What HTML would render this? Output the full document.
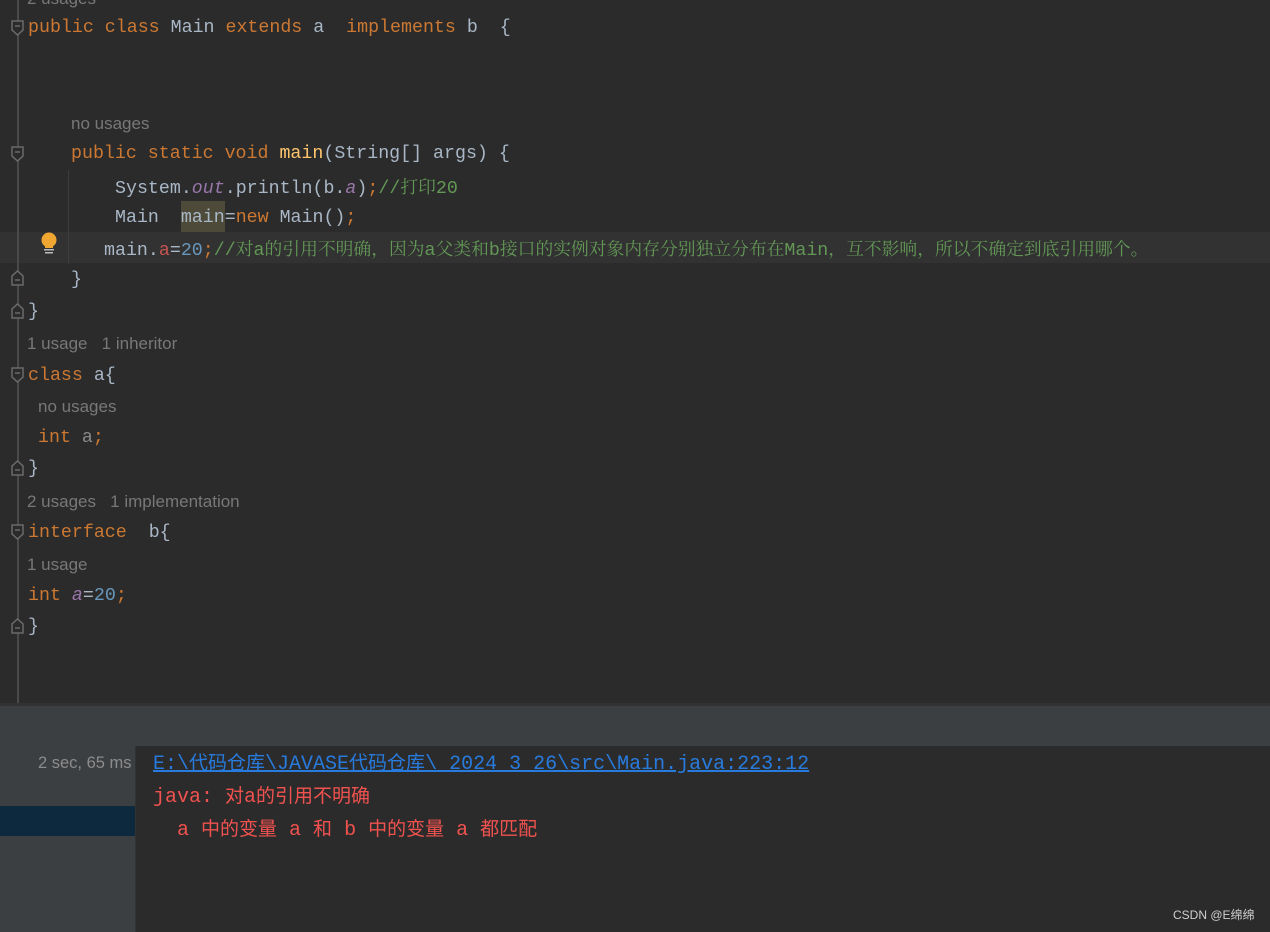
<!DOCTYPE html>
<html><head><meta charset="utf-8"><style>
body{margin:0;width:1270px;height:932px;background:#2b2b2b;overflow:hidden;position:relative;font-family:"Liberation Mono","Noto Sans CJK SC",monospace;}
.l{position:absolute;height:31px;line-height:31px;font-size:18.3px;white-space:pre;color:#a9b7c6;}
.h{position:absolute;height:31px;line-height:31px;font-size:17px;white-space:pre;color:#787878;font-family:"Liberation Sans","Noto Sans CJK SC",sans-serif;}
.k{color:#cc7832}.p{color:#9876aa;font-style:italic}.n{color:#6897bb}.f{color:#ffc66d}.c{color:#629755}.cj{color:#629755;font-family:"Noto Serif CJK SC","Noto Sans CJK SC",serif;font-size:17.8px}
.r{color:#c75450}.g{color:#8a8a8a}
.fold{position:absolute;left:11px;width:13px;height:16px;}
.cn{position:absolute;height:33px;line-height:33px;font-size:20px;white-space:pre;}
.cn i{font-style:normal;font-size:19px;}
</style></head><body>
<div style="position:absolute;left:0;top:232px;width:1270px;height:31px;background:#323232"></div>
<div style="position:absolute;left:17px;top:0;width:2px;height:703px;background:#4a4a4a"></div>
<div style="position:absolute;left:68px;top:170px;width:1px;height:94px;background:#3d3d3d"></div>
<div style="position:absolute;left:181px;top:201px;width:44px;height:31px;background:#4d4a39"></div>

<div class="h" style="left:27px;top:-17px">2 usages</div>
<div class="l" style="left:28px;top:13px"><span class="k">public class </span>Main <span class="k">extends </span>a  <span class="k">implements </span>b  {</div>
<div class="h" style="left:71px;top:108px">no usages</div>
<div class="l" style="left:71px;top:139px"><span class="k">public static void </span><span class="f">main</span>(String[] args) {</div>
<div class="l" style="left:115px;top:171px">System.<span class="p">out</span>.println(b.<span class="p">a</span>)<span class="k">;</span><span class="c">//</span><span class="cj">打印</span><span class="c">20</span></div>
<div class="l" style="left:115px;top:203px">Main  main=<span class="k">new </span>Main()<span class="k">;</span></div>
<div class="l" style="left:104px;top:233px">main.<span class="r">a</span>=<span class="n">20</span><span class="k">;</span><span class="c">//</span><span class="cj">对</span><span class="c">a</span><span class="cj">的引用不明确，因为</span><span class="c">a</span><span class="cj">父类和</span><span class="c">b</span><span class="cj">接口的实例对象内存分别独立分布在</span><span class="c">Main</span><span class="cj">，互不影响，所以不确定到底引用哪个。</span></div>
<div class="l" style="left:71px;top:265px">}</div>
<div class="l" style="left:28px;top:297px">}</div>
<div class="h" style="left:27px;top:328px">1 usage   1 inheritor</div>
<div class="l" style="left:28px;top:361px"><span class="k">class </span>a{</div>
<div class="h" style="left:38px;top:391px">no usages</div>
<div class="l" style="left:38px;top:423px"><span class="k">int </span><span class="g">a</span><span class="k">;</span></div>
<div class="l" style="left:28px;top:454px">}</div>
<div class="h" style="left:27px;top:486px">2 usages   1 implementation</div>
<div class="l" style="left:28px;top:518px"><span class="k">interface  </span>b{</div>
<div class="h" style="left:27px;top:549px">1 usage</div>
<div class="l" style="left:28px;top:581px"><span class="k">int </span><span class="p">a</span>=<span class="n">20</span><span class="k">;</span></div>
<div class="l" style="left:28px;top:612px">}</div>

<svg class="fold" style="top:20px" viewBox="0 0 13 16"><path d="M1 1H12V10L6.5 15L1 10Z" fill="#2b2b2b" stroke="#6b6b6b" stroke-width="1.5"/><path d="M4 6H9" stroke="#6b6b6b" stroke-width="1.5"/></svg>
<svg class="fold" style="top:146px" viewBox="0 0 13 16"><path d="M1 1H12V10L6.5 15L1 10Z" fill="#2b2b2b" stroke="#6b6b6b" stroke-width="1.5"/><path d="M4 6H9" stroke="#6b6b6b" stroke-width="1.5"/></svg>
<svg class="fold" style="top:367px" viewBox="0 0 13 16"><path d="M1 1H12V10L6.5 15L1 10Z" fill="#2b2b2b" stroke="#6b6b6b" stroke-width="1.5"/><path d="M4 6H9" stroke="#6b6b6b" stroke-width="1.5"/></svg>
<svg class="fold" style="top:524px" viewBox="0 0 13 16"><path d="M1 1H12V10L6.5 15L1 10Z" fill="#2b2b2b" stroke="#6b6b6b" stroke-width="1.5"/><path d="M4 6H9" stroke="#6b6b6b" stroke-width="1.5"/></svg>
<svg class="fold" style="top:270px" viewBox="0 0 13 16"><path d="M1 15H12V6L6.5 1L1 6Z" fill="#2b2b2b" stroke="#6b6b6b" stroke-width="1.5"/><path d="M4 10H9" stroke="#6b6b6b" stroke-width="1.5"/></svg>
<svg class="fold" style="top:303px" viewBox="0 0 13 16"><path d="M1 15H12V6L6.5 1L1 6Z" fill="#2b2b2b" stroke="#6b6b6b" stroke-width="1.5"/><path d="M4 10H9" stroke="#6b6b6b" stroke-width="1.5"/></svg>
<svg class="fold" style="top:460px" viewBox="0 0 13 16"><path d="M1 15H12V6L6.5 1L1 6Z" fill="#2b2b2b" stroke="#6b6b6b" stroke-width="1.5"/><path d="M4 10H9" stroke="#6b6b6b" stroke-width="1.5"/></svg>
<svg class="fold" style="top:618px" viewBox="0 0 13 16"><path d="M1 15H12V6L6.5 1L1 6Z" fill="#2b2b2b" stroke="#6b6b6b" stroke-width="1.5"/><path d="M4 10H9" stroke="#6b6b6b" stroke-width="1.5"/></svg>

<svg style="position:absolute;left:39px;top:232px" width="20" height="24" viewBox="0 0 20 24"><circle cx="10" cy="8" r="7.5" fill="#f0a732"/><rect x="6" y="12" width="8" height="4" fill="#f0a732"/><rect x="5" y="17" width="10" height="1.5" fill="#bbb"/><rect x="6" y="20" width="8" height="1.5" fill="#bbb"/></svg>

<div style="position:absolute;left:0;top:703px;width:1270px;height:3px;background:#323232"></div>
<div style="position:absolute;left:0;top:706px;width:1270px;height:226px;background:#3c3f41"></div>
<div style="position:absolute;left:0;top:806px;width:135px;height:30px;background:#0d293e"></div>
<div style="position:absolute;left:135px;top:746px;width:1135px;height:186px;background:#2b2b2b;border-left:1px solid #323232"></div>
<div class="h" style="left:38px;top:748px;color:#8c8c8c;font-size:16.5px">2 sec, 65 ms</div>
<div class="cn" style="left:153px;top:748px;color:#287bde;text-decoration:underline">E:\<i>代码仓库</i>\JAVASE<i>代码仓库</i>\_2024_3_26\src\Main.java:223:12</div>
<div class="cn" style="left:153px;top:781px;color:#f0524f">java: <i>对</i>a<i>的引用不明确</i></div>
<div class="cn" style="left:153px;top:814px;color:#f0524f">  a <i>中的变量</i> a <i>和</i> b <i>中的变量</i> a <i>都匹配</i></div>
<div style="position:absolute;left:1173px;top:906px;font-size:12px;color:#cfcfcf;font-family:'Liberation Sans','Noto Sans CJK SC',sans-serif">CSDN @E绵绵</div>
</body></html>
